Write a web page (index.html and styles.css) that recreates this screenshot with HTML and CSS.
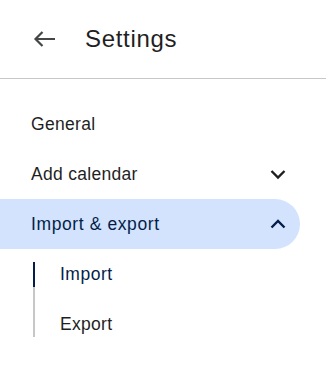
FILE: index.html
```html
<!DOCTYPE html>
<html lang="en">
<head>
    <meta charset="UTF-8">
    <meta name="viewport" content="width=device-width, initial-scale=1.0">
    <title>Settings</title>
    <link rel="stylesheet" href="styles.css">
</head>
<body>

<div class="header">
    <button class="back-btn" aria-label="Back">
        <svg width="24" height="24" viewBox="0 0 24 24">
            <path d="M22 12H2.5M9.5 5L2.5 12L9.5 19" fill="none" stroke="#444746" stroke-width="2.2"/>
        </svg>
    </button>
    <div class="title">Settings</div>
</div>

<div class="nav">
    <div class="nav-item">General</div>
    <div class="nav-item">
        Add calendar
        <svg class="chevron" width="24" height="24" viewBox="0 0 24 24">
            <path d="M5.5 9L12 15.5L18.5 9" fill="none" stroke="#1f1f1f" stroke-width="2.4"/>
        </svg>
    </div>
    <div class="nav-item active">
        Import &amp; export
        <svg class="chevron" width="24" height="24" viewBox="0 0 24 24">
            <path d="M5.5 15.5L12 9L18.5 15.5" fill="none" stroke="#041e49" stroke-width="2.4"/>
        </svg>
    </div>
    <div class="sub-list">
        <div class="sub-item active">Import</div>
        <div class="sub-item">Export</div>
    </div>
</div>

</body>
</html>
```

FILE: styles.css
```css
* {
    margin: 0;
    padding: 0;
    box-sizing: border-box;
}

body {
    font-family: 'Liberation Sans', Arial, sans-serif;
    color: #1f1f1f;
    background: #ffffff;
}

/* Top bar */
.header {
    display: flex;
    align-items: center;
    height: 79px;
    padding-left: 33px;
    border-bottom: 1px solid #c7c7c7;
}

.back-btn {
    display: flex;
    width: 24px;
    height: 24px;
    border: none;
    background: none;
    cursor: pointer;
}

.title {
    margin-left: 28px;
    font-size: 24px;
    letter-spacing: 0.7px;
    color: #1f1f1f;
    padding-bottom: 1px;
}

/* Side menu */
.nav {
    padding-top: 20px;
}

.nav-item {
    display: flex;
    align-items: center;
    justify-content: space-between;
    width: 300px;
    height: 50px;
    padding: 0 10px 0 31px;
    font-size: 17.5px;
    letter-spacing: 0.3px;
    border-radius: 0 25px 25px 0;
}

.nav-item.active {
    background: #d3e3fd;
    color: #041e49;
    letter-spacing: 0.6px;
}

.sub-list {
    display: flex;
    flex-direction: column;
    gap: 25px;
    margin: 13px 0 12px 33px;
    border-left: 2px solid #c7c7c7;
}

.sub-item {
    display: flex;
    align-items: center;
    height: 25px;
    padding-left: 25px;
    font-size: 17.5px;
    letter-spacing: 0.3px;
}

.sub-item.active {
    margin-left: -2px;
    border-left: 2px solid #041e49;
    color: #041e49;
    letter-spacing: 0.5px;
}
```
